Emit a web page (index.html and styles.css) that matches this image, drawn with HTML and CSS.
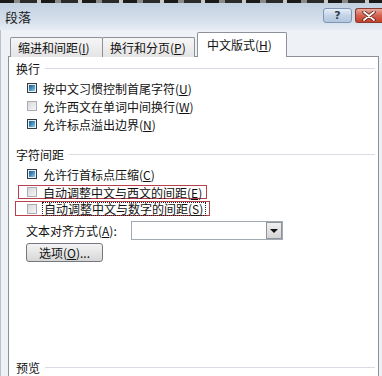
FILE: index.html
```html
<!DOCTYPE html>
<html lang="zh-CN">
<head>
  <meta charset="UTF-8" />
  <title>段落</title>
  <link rel="stylesheet" href="styles.css">
</head>
<body>
  <div class="top-strip"></div>
  <div class="titlebar">
    <span class="title">段落</span>
    <div class="caption-buttons">
      <span class="cap-btn help">?</span>
      <span class="cap-btn close">
        <svg width="14" height="10" viewBox="0 0 14 10">
          <path d="M2 1 L12 9 M12 1 L2 9" stroke="#5a1a12" stroke-width="3.4" stroke-linecap="round"/>
          <path d="M2 1 L12 9 M12 1 L2 9" stroke="#fff" stroke-width="1.8" stroke-linecap="round"/>
        </svg>
      </span>
    </div>
  </div>

  <div class="dialog">
    <div class="tabs">
      <div class="tab">缩进和间距(<u>I</u>)</div>
      <div class="tab">换行和分页(<u>P</u>)</div>
      <div class="tab active">中文版式(<u>H</u>)</div>
    </div>

    <div class="panel">
      <div class="group-title"><span>换行</span><i class="rule"></i></div>
      <label class="check"><span class="box on"></span><span>按中文习惯控制首尾字符(<u>U</u>)</span></label>
      <label class="check"><span class="box"></span><span>允许西文在单词中间换行(<u>W</u>)</span></label>
      <label class="check"><span class="box on"></span><span>允许标点溢出边界(<u>N</u>)</span></label>

      <div class="group-title second"><span>字符间距</span><i class="rule"></i></div>
      <label class="check"><span class="box on"></span><span>允许行首标点压缩(<u>C</u>)</span></label>
      <label class="check marked mark-e"><span class="box"></span><span>自动调整中文与西文的间距(<u>E</u>)</span></label>
      <label class="check marked mark-s"><span class="box"></span><span class="focus">自动调整中文与数字的间距(<u>S</u>)</span></label>

      <div class="align-row">
        <span class="align-label">文本对齐方式(<u>A</u>):</span>
        <div class="select">
          <span class="select-value"></span>
          <span class="select-arrow"><i></i></span>
        </div>
      </div>
      <button class="options">选项(<u>O</u>)...</button>

      <div class="group-title preview"><span>预览</span><i class="rule"></i></div>
    </div>
  </div>
</body>
</html>
```

FILE: styles.css
```css
html, body {
  margin: 0;
  height: 376px;
  overflow: hidden;
}

body {
  width: 382px;
  font-family: "Noto Sans CJK SC", "DejaVu Sans", sans-serif;
  font-size: 12px;
  color: #111;
  background: #eef1f5;
  display: flex;
  flex-direction: column;
}

u {
  text-decoration: underline;
  text-underline-offset: 1px;
}

.top-strip {
  height: 3px;
  background: repeating-linear-gradient(to right, #1a1a1a 0 14px, #8a8a8a 14px 20px, #2a2a2a 20px 37px, #c8c8c8 37px 41px);
}

.titlebar {
  height: 27px;
  display: flex;
  align-items: center;
  justify-content: space-between;
  padding-left: 5px;
  background: linear-gradient(to bottom, #c3d1e1, #d3deea 60%, #e6ecf3);
}

.title {
  font-size: 13px;
  color: #1b1b1b;
}

.caption-buttons {
  display: flex;
  gap: 3px;
  align-self: flex-start;
  margin-top: 5px;
}

.cap-btn {
  height: 15px;
  display: flex;
  align-items: center;
  justify-content: center;
  border-radius: 3px;
  box-sizing: border-box;
}

.help {
  width: 29px;
  border: 1px solid #7f97b4;
  background: linear-gradient(to bottom, #e6eef7, #c4d4e6 50%, #b2c6dd);
  color: #2f3d52;
  font-family: "DejaVu Sans", sans-serif;
  font-weight: bold;
  font-size: 11px;
}

.close {
  width: 27px;
  border: 1px solid #8a3a30;
  border-right: none;
  border-radius: 3px 0 0 3px;
  background: linear-gradient(to bottom, #e8a89a, #d26350 50%, #c2402c);
}

.dialog {
  flex: 1;
  display: flex;
  flex-direction: column;
  padding: 0 3px 0 7px;
  border-left: 1px solid #b9c0c8;
}

.tabs {
  display: flex;
  align-items: flex-end;
  height: 27px;
  padding-left: 2px;
  margin-bottom: -1px;
  position: relative;
  z-index: 1;
}

.tab {
  height: 20px;
  line-height: 19px;
  box-sizing: border-box;
  padding: 0 7px;
  border: 1px solid #8d9199;
  border-bottom: none;
  border-radius: 2px 2px 0 0;
  background: linear-gradient(to bottom, #f6f6f6, #e4e4e4);
  color: #111;
  width: 93px;
}

.tab + .tab {
  margin-left: -1px;
}

.tab.active {
  width: 90px;
  height: 25px;
  line-height: 24px;
  margin-left: 2px;
  padding-left: 9px;
  background: #fff;
  padding-bottom: 1px;
}

.panel {
  flex: 1;
  display: flex;
  flex-direction: column;
  background: #fff;
  border: 1px solid #8d9199;
  border-bottom: none;
  padding-left: 7px;
  padding-right: 3px;
}

.group-title {
  display: flex;
  align-items: center;
  height: 18px;
  margin-top: 2px;
  margin-bottom: 2px;
}

.group-title.second {
  margin-top: 12px;
}

.group-title.preview {
  margin-top: auto;
  margin-bottom: 0;
}

.rule {
  flex: 1;
  height: 1px;
  background: #d9dde3;
  margin-left: 5px;
  margin-top: 1px;
}

.check {
  display: flex;
  align-items: center;
  height: 18px;
  padding-left: 11px;
  gap: 6px;
  white-space: nowrap;
}

.box {
  width: 10px;
  height: 10px;
  box-sizing: border-box;
  border: 1px solid #a9adb3;
  background: linear-gradient(135deg, #d6d8db, #f6f6f6);
  flex: none;
}

.box.on {
  border-color: #333a42;
  padding: 1px;
  background: linear-gradient(135deg, #1f5682, #4a93c4 55%, #9fcde9) content-box, #e7eef4;
}

.marked {
  align-self: flex-start;
  box-sizing: border-box;
  border: 1px solid #b8404a;
}

.mark-e {
  height: 14px;
  margin: 2px 0 1px 2px;
  padding-left: 8px;
  padding-right: 4px;
}

.mark-s {
  height: 15px;
  margin: 1px 0 2px -1px;
  padding-left: 11px;
  padding-right: 4px;
}

.focus {
  outline: 1px dotted #222;
  line-height: 12px;
  padding: 0 2px 0 1px;
}

.align-row {
  display: flex;
  align-items: center;
  margin-top: 3px;
  padding-left: 10px;
  height: 19px;
}

.align-label {
  width: 105px;
}

.select {
  width: 152px;
  height: 19px;
  box-sizing: border-box;
  border: 1px solid #a3a9b1;
  display: flex;
  background: #fff;
}

.select-value {
  flex: 1;
}

.select-arrow {
  width: 16px;
  box-sizing: border-box;
  border: 1px solid #8e949b;
  background: linear-gradient(to bottom, #f0f0f0, #d4d4d4);
  display: flex;
  align-items: center;
  justify-content: center;
}

.select-arrow i {
  width: 0;
  height: 0;
  border-left: 4px solid transparent;
  border-right: 4px solid transparent;
  border-top: 4px solid #111;
}

.options {
  align-self: flex-start;
  margin: 3px 0 0 10px;
  width: 77px;
  height: 19px;
  padding: 0;
  font: inherit;
  color: #111;
  border: 1px solid #737880;
  border-radius: 3px;
  background: linear-gradient(to bottom, #f3f3f3, #e6e6e6 50%, #d6d6d6);
}
```
